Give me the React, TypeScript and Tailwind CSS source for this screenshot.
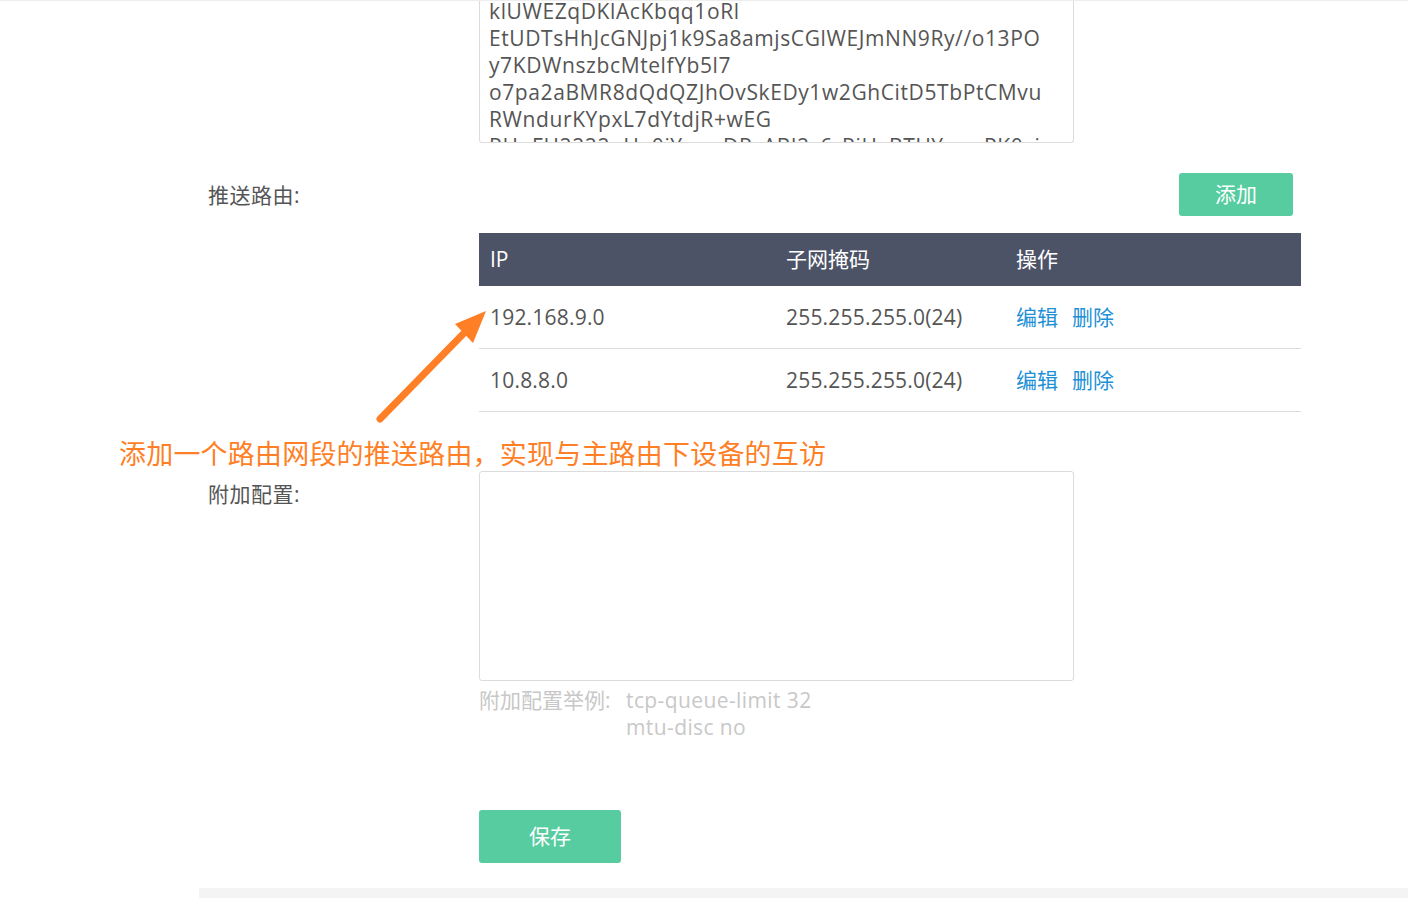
const certLines = [
  "klUWEZqDKlAcKbqq1oRl",
  "EtUDTsHhJcGNJpj1k9Sa8amjsCGlWEJmNN9Ry//o13PO",
  "y7KDWnszbcMtelfYb5l7",
  "o7pa2aBMR8dQdQZJhOvSkEDy1w2GhCitD5TbPtCMvu",
  "RWndurKYpxL7dYtdjR+wEG",
  "RHqFH2222nUe0iYnnnDRzABl2c6rRiHxBTUYnnnPK0yi",
];

const routes = [
  { ip: "192.168.9.0", mask: "255.255.255.0(24)" },
  { ip: "10.8.8.0", mask: "255.255.255.0(24)" },
];

function App() {
  return (
    <div className="relative h-[898px] w-[1408px] overflow-hidden border-t border-[#eeeeee] bg-white font-['Open_Sans','Noto_Sans_CJK_SC',sans-serif] text-[21px] text-[#555555]">
      <div className="pl-[208px]">
        {/* 证书内容（已滚动） */}
        <div className="flex">
          <div className="w-[271px] shrink-0" />
          <div className="h-[142px] w-[595px] overflow-hidden rounded-b-[3px] border-x border-b border-[#dcdcdc]">
            <div className="-mt-[3px] px-[9px] leading-[27px] tracking-[0.6px] whitespace-nowrap">
              {certLines.map((line) => (
                <div key={line}>{line}</div>
              ))}
            </div>
          </div>
        </div>

        {/* 推送路由 */}
        <div className="mt-[30px] flex">
          <div className="w-[271px] shrink-0 pt-[9px] leading-[27px] tracking-[0.5px]">推送路由:</div>
          <div className="w-[822px]">
            <div className="flex justify-end pr-[8px]">
              <button className="h-[43px] w-[114px] rounded-[3px] bg-[#57cca0] text-[21px] text-white">
                添加
              </button>
            </div>
            <div className="mt-[17px]">
              <div className="grid h-[53px] grid-cols-[296px_230px_296px] items-center bg-[#4d5367] pl-[11px] text-white">
                <div>IP</div>
                <div>子网掩码</div>
                <div>操作</div>
              </div>
              {routes.map((r) => (
                <div
                  key={r.ip}
                  className="grid h-[63px] grid-cols-[296px_230px_296px] items-center border-b border-[#dddddd] pl-[11px] pt-[2px]"
                >
                  <div className="tracking-[0.2px]">{r.ip}</div>
                  <div className="tracking-[0.2px]">{r.mask}</div>
                  <div className="flex gap-[14px] text-[#1e90d6]">
                    <span>编辑</span>
                    <span>删除</span>
                  </div>
                </div>
              ))}
            </div>
          </div>
        </div>

        {/* 附加配置 */}
        <div className="mt-[59px] flex">
          <div className="w-[271px] shrink-0 pt-[10px] leading-[27px] tracking-[0.5px]">附加配置:</div>
          <div>
            <div className="h-[210px] w-[595px] rounded-[3px] border border-[#dcdcdc]" />
            <div className="mt-[6px] flex leading-[27px] text-[#c8c8c8]">
              <div className="w-[147px]">附加配置举例:</div>
              <div className="tracking-[0.4px]">
                <div>tcp-queue-limit 32</div>
                <div>mtu-disc no</div>
              </div>
            </div>
            <button className="mt-[69px] h-[53px] w-[142px] rounded-[3px] bg-[#57cca0] text-[21px] text-white">
              保存
            </button>
          </div>
        </div>
      </div>

      <div className="ml-[199px] mt-[25px] h-[20px] bg-[#f4f4f4]" />

      {/* 标注 */}
      <svg
        className="absolute left-[370px] top-[300px]"
        width="130"
        height="130"
        viewBox="0 0 130 130"
      >
        <line x1="10" y1="118" x2="96" y2="30" stroke="#ff7f27" strokeWidth="7" strokeLinecap="round" />
        <polygon points="116,10 85,23 103,42" fill="#ff7f27" />
      </svg>
      <div className="absolute left-[119px] top-[436px] font-['Noto_Sans_CJK_SC',sans-serif] text-[27px] leading-[32px] tracking-[0.2px] text-[#ff7f27]">
        添加一个路由网段的推送路由，实现与主路由下设备的互访
      </div>
    </div>
  );
}

export default App;
